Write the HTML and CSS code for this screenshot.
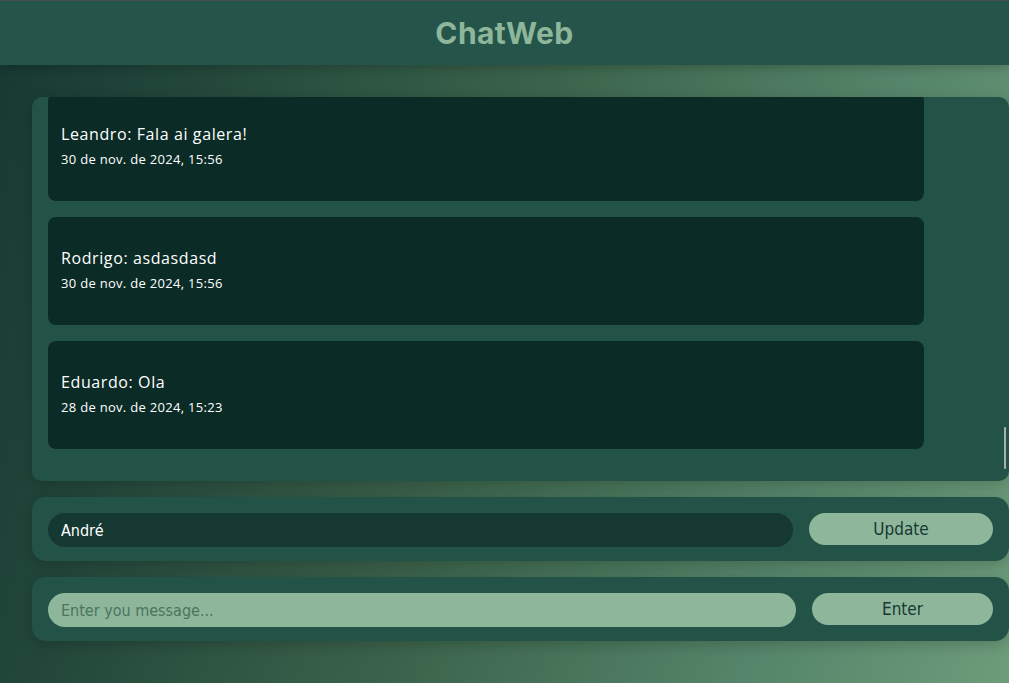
FILE: index.html
```html
<!DOCTYPE html>
<html lang="pt-BR">
<head>
<meta charset="utf-8">
<title>ChatWeb</title>
<link rel="stylesheet" href="styles.css">
</head>
<body>
<header class="topbar">
  <h1 class="title">ChatWeb</h1>
</header>
<main class="chat">
  <div class="messages-wrap">
    <section class="messages" id="messages">
      <div class="msg"><p class="msg-text">Leandro: Fala ai galera!</p><span class="msg-date">30 de nov. de 2024, 15:56</span></div>
      <div class="msg"><p class="msg-text">Rodrigo: asdasdasd</p><span class="msg-date">30 de nov. de 2024, 15:56</span></div>
      <div class="msg"><p class="msg-text">Eduardo: Ola</p><span class="msg-date">28 de nov. de 2024, 15:23</span></div>
    </section>
    <span class="scroll-thumb"></span>
  </div>
  <form class="bar name-bar">
    <input class="field field-dark" type="text" value="André">
    <button class="btn btn-update" type="button">Update</button>
  </form>
  <form class="bar send-bar">
    <input class="field field-light" type="text" placeholder="Enter you message...">
    <button class="btn btn-enter" type="button">Enter</button>
  </form>
</main>
<script src="script.js"></script>
</body>
</html>
```
FILE: styles.css
```css
* { box-sizing: border-box; }

html, body { height: 100%; }

body {
  margin: 0;
  font-family: "Open Sans", sans-serif;
  background: linear-gradient(105deg, #163832 0%, #22473a 18%, #3b634b 48%, #55856a 78%, #6d9c7a 100%);
  overflow: hidden;
}

.topbar {
  height: 65px;
  border-top: 1px solid #4a4d58;
  background: #24544a;
  display: flex;
  align-items: center;
  justify-content: center;
  box-shadow: 0 2px 10px rgba(0, 0, 0, 0.22);
  position: relative;
}

.title {
  margin: 0;
  font-family: Inter, sans-serif;
  font-weight: 700;
  font-size: 30px;
  letter-spacing: 0.4px;
  color: #8eb69b;
}

.chat {
  padding: 32px 0 0 32px;
  display: flex;
  flex-direction: column;
  gap: 16px;
}

.messages-wrap {
  position: relative;
}

.messages {
  height: 384px;
  background: #235347;
  border-radius: 10px;
  padding: 0 85px 32px 16px;
  overflow-y: auto;
  scrollbar-width: none;
  display: flex;
  flex-direction: column;
  gap: 16px;
  box-shadow: 0 4px 14px rgba(0, 0, 0, 0.18);
}

.messages::-webkit-scrollbar { display: none; }

.scroll-thumb {
  position: absolute;
  right: 3px;
  bottom: 12px;
  width: 2px;
  height: 42px;
  background: #a9b0ad;
  border-radius: 1px;
}

.msg {
  flex: 0 0 108px;
  background: #0b2b26;
  border-radius: 8px;
  padding: 29px 13px 0;
  color: #ffffff;
}

.msg-text {
  margin: 0;
  font-size: 16px;
  letter-spacing: 0.6px;
  line-height: 24px;
}

.msg-date {
  display: block;
  margin-top: 3px;
  font-size: 13px;
  letter-spacing: 0.3px;
  line-height: 20px;
}

.bar {
  margin: 0;
  height: 64px;
  background: #235347;
  border-radius: 14px;
  padding: 16px;
  display: flex;
  align-items: flex-start;
  gap: 16px;
  box-shadow: 0 4px 14px rgba(0, 0, 0, 0.18);
}

.field {
  flex: 1;
  height: 34px;
  border: none;
  border-radius: 17px;
  padding: 0 13px;
  font-family: "DejaVu Sans Condensed", "DejaVu Sans", sans-serif;
  font-size: 16px;
  outline: none;
}

.field-dark {
  background: #163832;
  color: #ffffff;
}

.field-light {
  background: #8eb69b;
  color: #163832;
}

.field-light::placeholder { color: #4a7460; }

.btn {
  height: 32px;
  border: none;
  border-radius: 16px;
  background: #8eb69b;
  color: #163832;
  font-family: "DejaVu Sans Condensed", "DejaVu Sans", sans-serif;
  font-size: 17px;
  padding: 0;
}

.btn-update { flex: 0 0 184px; }
.btn-enter { flex: 0 0 181px; }
```
FILE: script.js
```js
var box = document.getElementById('messages');
box.scrollTop = box.scrollHeight;
```
